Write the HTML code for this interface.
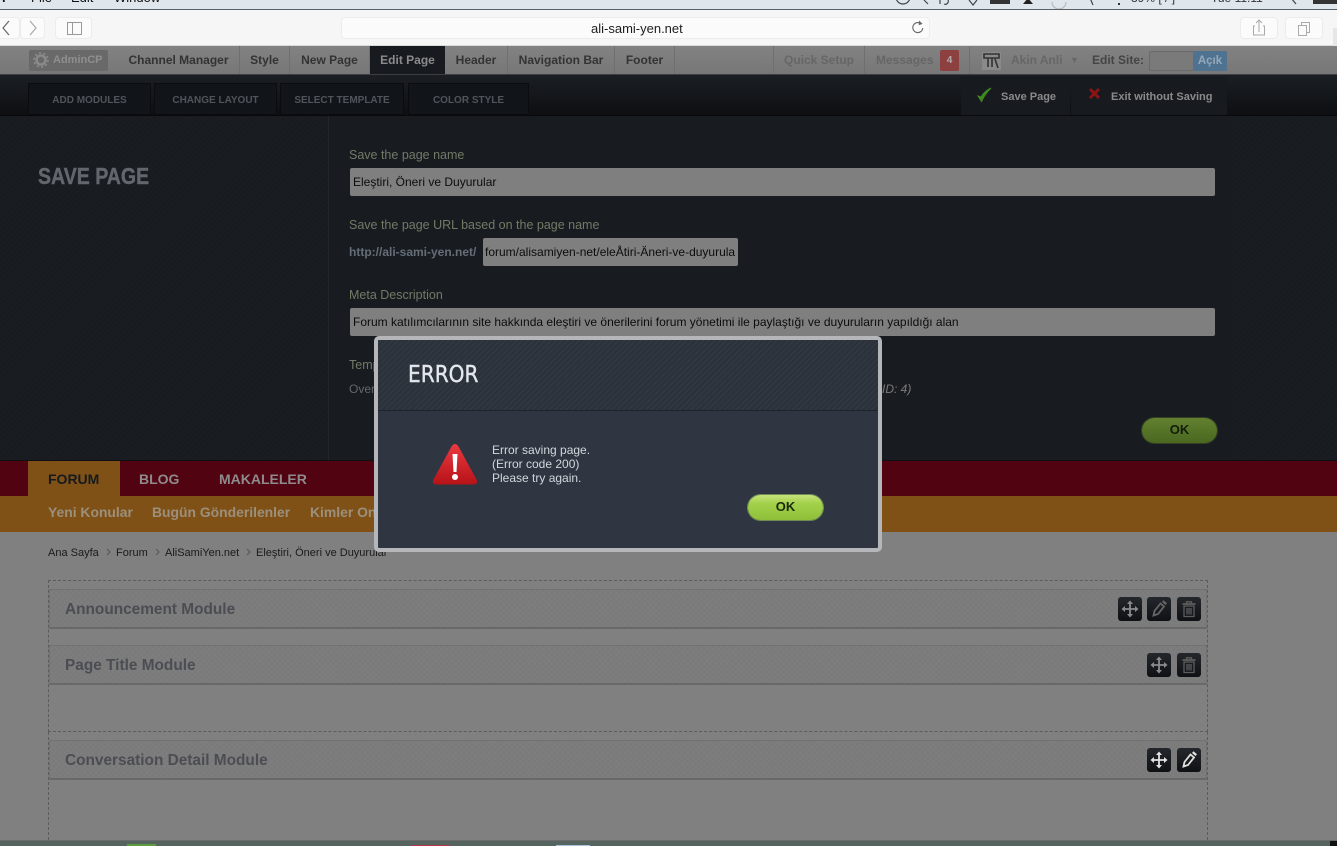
<!DOCTYPE html>
<html lang="tr"><head><meta charset="utf-8"><title>ali-sami-yen.net</title>
<style>
html,body{margin:0;padding:0;width:1337px;height:846px;overflow:hidden;background:#808080}
body{position:relative;font-family:"Liberation Sans",sans-serif}
.a,.t{position:absolute}
.t{white-space:nowrap}
.nav{top:46px;height:28px;font:bold 12px/28px "Liberation Sans",sans-serif;color:#333;text-align:center;border-right:1px solid #6f6f6f;box-sizing:border-box}
.sub{height:32px;background:#111419;border:1px solid #0a0c0f;box-sizing:border-box;color:#50555b;font:bold 10px/34px "Liberation Sans",sans-serif;text-align:center}
.lab{left:349px;font-size:12.5px;line-height:16px;color:#727a66}
.inp{background:#7f7f7f;border-radius:2px;color:#0c0c0c;font-size:12px;line-height:28px;height:28px;box-sizing:border-box;padding-left:3px;white-space:nowrap;overflow:hidden}
.mod{left:49px;width:1158px;background-color:#7a7a7a;background-image:repeating-linear-gradient(45deg,#7e7e7e 0 1px,transparent 1px 4px),repeating-linear-gradient(-45deg,#7e7e7e 0 1px,transparent 1px 4px);border:1px solid #727272;border-bottom:2px solid #686868;box-sizing:border-box;color:#4b4d52;font:bold 15.4px/40px "Liberation Sans",sans-serif;padding-left:15px;height:40px}
.btn{width:24px;height:24px;border-radius:3px;background:linear-gradient(#24272c,#0f1114)}
.btn svg{display:block}
</style></head><body>
<!-- mac menu bar -->
<div class="a" style="left:0;top:0;width:1337px;height:10px;background:#dfe6ec;border-bottom:1px solid #56616a;box-sizing:border-box"></div>
<div class="t" style="left:-3px;top:-10px;font:bold 13px/16px 'Liberation Sans',sans-serif;color:#111">ri</div>
<div class="t" style="left:31px;top:-10px;font-size:13px;line-height:16px;color:#111">File</div>
<div class="t" style="left:71px;top:-10px;font-size:13px;line-height:16px;color:#111">Edit</div>
<div class="t" style="left:114px;top:-10px;font-size:13px;line-height:16px;color:#111">Window</div>
<div class="t" style="left:1131px;top:-10px;font-size:12px;line-height:16px;color:#333">89% [ / ]</div>
<div class="t" style="left:1211px;top:-10px;font-size:12px;line-height:16px;color:#333">Tue 11:11</div>
<svg class="a" style="left:880px;top:0" width="457" height="9"><g fill="none" stroke="#444" stroke-width="1.2"><path d="M16-3a7 7 0 0 0 14 0"/><path d="M44 0l4 4M60 0v4M64 4a3 3 0 0 0 4-4"/><path d="M89 0l4 5 4-5"/><path d="M172 2a7 7 0 0 0 14 0" stroke="#bbb"/><path d="M210-2l3 7"/><path d="M411-2l5 6" /></g><rect x="110" y="0" width="20" height="4" fill="#333"/><path d="M143 4l5-6 5 6z" fill="#222"/><rect x="238" y="3" width="2" height="2" fill="#333"/><rect x="433" y="0" width="24" height="4" fill="#333"/></svg>
<!-- safari toolbar -->
<div class="a" style="left:0;top:10px;width:1337px;height:36px;background:#f6f6f6;border-bottom:1px solid #d9d9d9;box-sizing:border-box"></div>
<div class="a" style="left:-6px;top:17px;width:26px;height:22px;background:#fbfbfb;border:1px solid #ececec;border-radius:4px;box-sizing:border-box"></div>
<div class="a" style="left:20px;top:17px;width:25px;height:22px;background:#fbfbfb;border:1px solid #ececec;border-radius:4px;box-sizing:border-box"></div>
<div class="a" style="left:55px;top:17px;width:37px;height:22px;background:#fbfbfb;border:1px solid #ececec;border-radius:4px;box-sizing:border-box"></div>
<svg class="a" style="left:0;top:17px" width="90" height="24"><path d="M9 4L3 11l6 7" fill="none" stroke="#666" stroke-width="1.2"/><path d="M30 4l6 7-6 7" fill="none" stroke="#aaa" stroke-width="1.2"/><rect x="67.500" y="5.500" width="14" height="12" fill="none" stroke="#999"/><path d="M72.500 5.500v12" stroke="#999"/></svg>
<div class="a" style="left:341px;top:17px;width:589px;height:22px;background:#fbfbfb;border:1px solid #ececec;border-radius:4px;box-sizing:border-box"></div>
<div class="t" style="left:591px;top:21px;font-size:13px;line-height:16px;color:#1d1d1d">ali-sami-yen.net</div>
<svg class="a" style="left:909px;top:19px" width="18" height="18"><path d="M12.500 5.200A5 5 0 1 0 13.800 9" fill="none" stroke="#666" stroke-width="1.100"/><path d="M10 1.500l3.500 3.300-3.700 1.400z" fill="#666"/></svg>
<div class="a" style="left:1240px;top:17px;width:38px;height:22px;background:#fbfbfb;border:1px solid #ececec;border-radius:4px;box-sizing:border-box"></div>
<div class="a" style="left:1285px;top:17px;width:38px;height:22px;background:#fbfbfb;border:1px solid #ececec;border-radius:4px;box-sizing:border-box"></div>
<svg class="a" style="left:1240px;top:17px" width="84" height="24"><path d="M19 3v12M16 6l3-3 3 3M15 9h-1.500v9h11V9H23" fill="none" stroke="#aaa"/><rect x="58.500" y="8.500" width="8" height="10" fill="#fbfbfb" stroke="#aaa"/><path d="M61.500 8.500v-3h8v10h-3" fill="none" stroke="#aaa"/></svg>
<div class="a" style="left:1333px;top:28px;width:4px;height:18px;background:#e6e6e6"></div>
<!-- admin bar -->
<div class="a" style="left:0;top:46px;width:1337px;height:29px;background:linear-gradient(#828282,#777);border-bottom:1px solid #3c3e40;box-sizing:border-box"></div>
<div class="a" style="left:29px;top:50px;width:79px;height:21px;background:#696969;border-radius:2px"></div>
<svg class="a" style="left:33px;top:52px" width="17" height="17"><circle cx="8" cy="8" r="4.500" fill="none" stroke="#8a8a8a" stroke-width="2.600"/><circle cx="8" cy="8" r="7" fill="none" stroke="#8a8a8a" stroke-width="1.600" stroke-dasharray="2.200 2.200"/></svg>
<div class="t" style="left:53px;top:46px;font:bold 11px/28px 'Liberation Sans',sans-serif;color:#8f8f8f">AdminCP</div>
<div class="t nav" style="left:118px;width:122px">Channel Manager</div>
<div class="t nav" style="left:240px;width:50px">Style</div>
<div class="t nav" style="left:290px;width:80px">New Page</div>
<div class="t nav" style="left:370px;width:75px;background:#171b20;color:#8b8b8b;border:0">Edit Page</div>
<div class="t nav" style="left:445px;width:63px">Header</div>
<div class="t nav" style="left:508px;width:107px">Navigation Bar</div>
<div class="t nav" style="left:615px;width:60px;">Footer</div>
<div class="t nav" style="left:773px;width:92px;color:#666;border-left:1px solid #6f6f6f">Quick Setup</div>
<div class="t" style="left:876px;top:46px;font:bold 12px/28px 'Liberation Sans',sans-serif;color:#666">Messages</div>
<div class="a" style="left:940px;top:50px;width:19px;height:21px;background:#8d4040;border-radius:2px;color:#b7a9a9;font:bold 10px/21px 'Liberation Sans',sans-serif;text-align:center">4</div>
<div class="a" style="left:969px;top:47px;width:1px;height:27px;background:#6f6f6f"></div>
<div class="a" style="left:982px;top:52px;width:19px;height:18px;background:#8a8a8a"></div>
<svg class="a" style="left:982px;top:52px" width="19" height="18"><path d="M2 2h15v4H2zM6 6v9M10 6v9M13 7l3 9" stroke="#333" stroke-width="1.600" fill="none"/></svg>
<div class="t" style="left:1011px;top:46px;font:bold 12px/28px 'Liberation Sans',sans-serif;color:#666">Akin Anli</div>
<div class="t" style="left:1070px;top:46px;font-size:9px;line-height:28px;color:#666">▼</div>
<div class="t" style="left:1092px;top:46px;font:bold 12px/28px 'Liberation Sans',sans-serif;color:#444">Edit Site:</div>
<div class="a" style="left:1149px;top:51px;width:78px;height:20px;background:#7a7a7a;border:1px solid #6a6a6a;box-sizing:border-box;border-radius:2px"></div>
<div class="a" style="left:1193px;top:51px;width:34px;height:20px;background:#4f7290;color:#95a9b9;font:bold 11.5px/20px 'Liberation Sans',sans-serif;text-align:center;border-radius:0 2px 2px 0">Açık</div>
<!-- sub bar -->
<div class="a" style="left:0;top:75px;width:1337px;height:41px;background:linear-gradient(#1b1f24,#0d0f12);border-bottom:1px solid #08090b;box-sizing:border-box"></div>
<div class="a sub" style="left:28px;top:83px;width:123px">ADD MODULES</div>
<div class="a sub" style="left:154px;top:83px;width:123px">CHANGE LAYOUT</div>
<div class="a sub" style="left:280px;top:83px;width:124px">SELECT TEMPLATE</div>
<div class="a sub" style="left:408px;top:83px;width:121px">COLOR STYLE</div>
<div class="a" style="left:961px;top:76px;width:109px;height:39px;background:#171b20"></div>
<div class="a" style="left:1071px;top:76px;width:156px;height:39px;background:#171b20"></div>
<svg class="a" style="left:976px;top:87px" width="18" height="16"><path d="M2 9l3.500 5.500C8 9 11 5 15 1c-4 2-7.500 5-10 9z" fill="#3f8a1e" stroke="#3f8a1e"/></svg>
<svg class="a" style="left:1088px;top:87px" width="14" height="14"><path d="M2 2l9 9M11 2l-9 9" stroke="#8c1414" stroke-width="3"/></svg>
<div class="t" style="left:1001px;top:89px;font:bold 11px/16px 'Liberation Sans',sans-serif;color:#8a8a8a">Save Page</div>
<div class="t" style="left:1111px;top:89px;font:bold 11px/16px 'Liberation Sans',sans-serif;color:#8a8a8a">Exit without Saving</div>
<!-- save page panel -->
<div class="a" style="left:0;top:116px;width:1337px;height:344px;background-color:#181c21;background-image:repeating-linear-gradient(-45deg,#1b1f24 0 1px,transparent 1px 4px)"></div>
<div class="a" style="left:328px;top:116px;width:1px;height:344px;background:#22262c"></div>
<div class="a" style="left:329px;top:116px;width:903px;height:344px;background:#181c21"></div>
<div class="t" style="left:38px;top:161px;font:bold 23px/30px 'Liberation Sans',sans-serif;color:#63676d;transform:scaleX(.85);transform-origin:left;-webkit-text-stroke:.4px #63676d">SAVE PAGE</div>
<div class="t lab" style="top:147px">Save the page name</div>
<div class="a inp" style="left:350px;top:168px;width:865px">Eleştiri, Öneri ve Duyurular</div>
<div class="t lab" style="top:217px">Save the page URL based on the page name</div>
<div class="t" style="left:349px;top:244px;font:bold 12px/16px 'Liberation Sans',sans-serif;color:#656d76">http://ali-sami-yen.net/</div>
<div class="a inp" style="left:483px;top:238px;width:255px;padding-left:2px">forum/alisamiyen-net/eleÅtiri-Äneri-ve-duyurula</div>
<div class="t lab" style="top:287px">Meta Description</div>
<div class="a inp" style="left:350px;top:308px;width:865px">Forum katılımcılarının site hakkında eleştiri ve önerilerini forum yönetimi ile paylaştığı ve duyuruların yapıldığı alan</div>
<div class="t lab" style="top:357px">Template</div>
<div class="t" style="left:349px;top:381px;font-size:12px;line-height:16px;color:#63676d">Overwrite</div>
<div class="t" style="left:882px;top:381px;font:italic 12px/16px 'Liberation Sans',sans-serif;color:#7a7a7a">ID: 4)</div>
<div class="a" style="left:1142px;top:418px;width:75px;height:25px;border-radius:13px;background:linear-gradient(#62802f,#4a6820);box-shadow:0 0 0 1px #353f24;color:#141b0a;font:bold 13px/23px 'Liberation Sans',sans-serif;text-align:center">OK</div>
<!-- site nav -->
<div class="a" style="left:0;top:460px;width:1337px;height:1px;background:#0d0f12"></div>
<div class="a" style="left:0;top:461px;width:1337px;height:35px;background:#510311"></div>
<div class="a" style="left:0;top:496px;width:1337px;height:36px;background:#7f5116"></div>
<div class="a" style="left:28px;top:461px;width:92px;height:35px;background:#7f5116"></div>
<div class="t" style="left:48px;top:469px;font:bold 14px/20px 'Liberation Sans',sans-serif;color:#161a1e">FORUM</div>
<div class="t" style="left:139px;top:469px;font:bold 14px/20px 'Liberation Sans',sans-serif;color:#8f8a8c">BLOG</div>
<div class="t" style="left:219px;top:469px;font:bold 14px/20px 'Liberation Sans',sans-serif;color:#8f8a8c">MAKALELER</div>
<div class="t" style="left:48px;top:502px;font:bold 13.900px/20px 'Liberation Sans',sans-serif;color:#9c8f7c">Yeni Konular</div>
<div class="t" style="left:152px;top:502px;font:bold 13.900px/20px 'Liberation Sans',sans-serif;color:#9c8f7c">Bugün Gönderilenler</div>
<div class="t" style="left:310px;top:502px;font:bold 13.900px/20px 'Liberation Sans',sans-serif;color:#9c8f7c">Kimler Online</div>
<!-- body -->
<div class="a" style="left:0;top:532px;width:1337px;height:308px;background:#808080"></div>
<div class="t" style="left:48px;top:545px;font-size:11px;line-height:16px;color:#1a1a1a">Ana Sayfa</div>
<div class="t" style="left:116px;top:545px;font-size:11px;line-height:16px;color:#1a1a1a">Forum</div>
<div class="t" style="left:165px;top:545px;font-size:11px;line-height:16px;color:#1a1a1a">AliSamiYen.net</div>
<div class="t" style="left:256px;top:545px;font-size:11px;line-height:16px;color:#1a1a1a">Eleştiri, Öneri ve Duyurular</div>
<svg class="a" style="left:101px;top:546px" width="160" height="12"><path d="M6 3l3 3-3 3M55 3l3 3-3 3M146 3l3 3-3 3" fill="none" stroke="#555"/></svg>
<div class="a" style="left:48px;top:580px;width:1160px;height:152px;border:1px dashed #5c5c5c;box-sizing:border-box"></div>
<div class="a" style="left:48px;top:732px;width:1160px;height:108px;border-left:1px dashed #5c5c5c;border-right:1px dashed #5c5c5c;box-sizing:border-box"></div>
<div class="a mod" style="top:589px">Announcement Module</div>
<div class="a mod" style="top:645px">Page Title Module</div>
<div class="a mod" style="top:740px">Conversation Detail Module</div>
<!-- buttons -->
<svg width="0" height="0" style="position:absolute"><defs>
<g id="mv"><path d="M12 6v12M6 12h12" stroke="currentColor" stroke-width="1.800" fill="none"/><path d="M12 3.500l-3 3.500h6zM12 20.500l-3-3.500h6zM3.500 12L7 9v6zM20.500 12L17 9v6z" fill="currentColor"/></g>
<g id="pn"><path d="M6.500 18.500l1-4.500 6-7.500 3.500 3-6 7.500z" fill="none" stroke="currentColor" stroke-width="1.800"/><path d="M15 5l1.500-1.800 3.500 3L18.500 8z" fill="currentColor"/></g>
<g id="tr"><path d="M5.500 7h13" fill="none" stroke="currentColor" stroke-width="1.800"/><path d="M9.500 6.500V4.800h5v1.700M7 9h10v10.500H7zM10 11v6.500M12 11v6.500M14 11v6.500" fill="none" stroke="currentColor" stroke-width="1.300"/></g>
</defs></svg>
<div class="a btn" style="left:1118px;top:597px;color:#8b8b8b"><svg width="24" height="24"><use href="#mv"/></svg></div>
<div class="a btn" style="left:1147px;top:597px;color:#666"><svg width="24" height="24"><use href="#pn"/></svg></div>
<div class="a btn" style="left:1177px;top:597px;color:#5d5d5d"><svg width="24" height="24"><use href="#tr"/></svg></div>
<div class="a btn" style="left:1147px;top:653px;color:#8b8b8b"><svg width="24" height="24"><use href="#mv"/></svg></div>
<div class="a btn" style="left:1177px;top:653px;color:#5d5d5d"><svg width="24" height="24"><use href="#tr"/></svg></div>
<div class="a btn" style="left:1147px;top:748px;color:#e2e2e2"><svg width="24" height="24"><use href="#mv"/></svg></div>
<div class="a btn" style="left:1177px;top:748px;color:#e2e2e2"><svg width="24" height="24"><use href="#pn"/></svg></div>
<!-- dock strip -->
<div class="a" style="left:0;top:840px;width:1337px;height:6px;background:#56645f;border-top:1px solid #6a6a6a;box-sizing:border-box"></div>
<div class="a" style="left:127px;top:844px;width:29px;height:2px;background:#5c9c3c"></div>
<div class="a" style="left:411px;top:845px;width:38px;height:1px;background:#b8304a"></div>
<div class="a" style="left:556px;top:845px;width:34px;height:1px;background:#a9c3dc"></div>
<div class="a" style="left:1330px;top:841px;width:7px;height:5px;background:#111"></div>
<!-- modal -->
<div class="a" style="left:374px;top:336px;width:508px;height:216px;background:#2f3641;border:4px solid #b4b6b9;box-sizing:border-box;border-radius:5px;overflow:hidden">
 <div class="a" style="left:0;top:0;width:500px;height:70px;background-color:#2c323b;background-image:repeating-linear-gradient(-45deg,#343a43 0 1px,transparent 1px 4px);border-bottom:1px solid #1f242b"></div>
 <div class="t" style="left:30px;top:20px;font:23px/30px 'DejaVu Sans','Liberation Sans',sans-serif;color:#e4e8ee;transform:scaleX(.875);transform-origin:left;-webkit-text-stroke:.4px #e4e8ee">ERROR</div>
 <svg class="a" style="left:54px;top:102px" width="46" height="44"><defs><linearGradient id="r" x1="0" y1="0" x2="0" y2="1"><stop offset="0" stop-color="#ec3a40"/><stop offset="1" stop-color="#b51218"/></linearGradient></defs><path d="M23 2c1.500 0 2.500 1 3.500 2.500l18 33c1.500 2.800 0 5-2.500 5H4c-2.500 0-4-2.200-2.500-5l18-33C20.500 3 21.500 2 23 2z" fill="url(#r)"/><path d="M20.500 12h5l-1 18h-3z" fill="#fff"/><circle cx="23" cy="35" r="3" fill="#fff"/></svg>
 <div class="a" style="left:114px;top:103px;font-size:12px;line-height:14px;color:#d3d7dc;white-space:nowrap">Error saving page.<br>(Error code 200)<br>Please try again.</div>
 <div class="a" style="left:370px;top:155px;width:75px;height:25px;border-radius:13px;background:linear-gradient(#c5e37a 0,#a2d04a 35%,#8fc03a 100%);box-shadow:0 0 0 1px #6f8a55;color:#1c2a0a;font:bold 13px/24px 'Liberation Sans',sans-serif;text-align:center">OK</div>
</div>
</body></html>
